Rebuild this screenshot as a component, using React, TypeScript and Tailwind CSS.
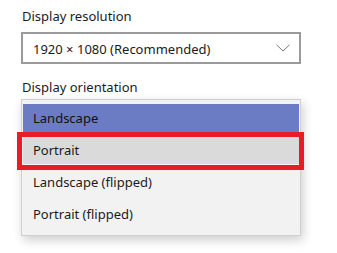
import React from "react";

const items = ["Landscape", "Portrait", "Landscape (flipped)", "Portrait (flipped)"];

export default function App() {
  return (
    <div
      className="w-[337px] h-[253px] bg-white overflow-hidden text-[#1b1b1b]"
      style={{ fontFamily: '"Noto Sans", "Open Sans", sans-serif' }}
    >
      <div className="pl-[21px] pt-[6px]">
        <div className="pl-[1px] text-[13px] leading-[20px]">Display resolution</div>
        <div className="mt-[6px] w-[280px] h-[32px] border-2 border-[#9a9a9a] flex items-center justify-between pl-[10px] pr-[8px]">
          <span className="pt-[1px] text-[13px] leading-[20px]">1920 × 1080 (Recommended)</span>
          <svg width="14" height="8" viewBox="0 0 14 8" className="mr-[1px]">
            <path d="M0.5 0.8 L7 7 L13.5 0.8" fill="none" stroke="#7a7a7a" strokeWidth="1" />
          </svg>
        </div>
        <div className="mt-[13px] pl-[1px] text-[13px] leading-[20px]">Display orientation</div>
        <div className="mt-[2px] w-[280px] h-[137px] border border-[#cfcfcf] bg-[#f2f2f2] pt-[2px] shadow-[2px_4px_10px_rgba(0,0,0,0.2)]">
          {items.map((t, i) => (
            <div key={t} className="relative h-[32px] flex">
              <div
                className={
                  "flex-1 my-[2px] mx-[1px] flex items-center pl-[10px] pt-[2px] text-[13px] " +
                  (i === 0 ? "bg-[#6b7bc4] text-[#111]" : i === 1 ? "bg-[#dadada]" : "")
                }
              >
                {t}
              </div>
              {i === 1 && (
                <div className="absolute -left-[5px] -right-[4px] -top-[2px] -bottom-[4px] border-[5px] border-[#e81c24]" />
              )}
            </div>
          ))}
        </div>
      </div>
    </div>
  );
}
